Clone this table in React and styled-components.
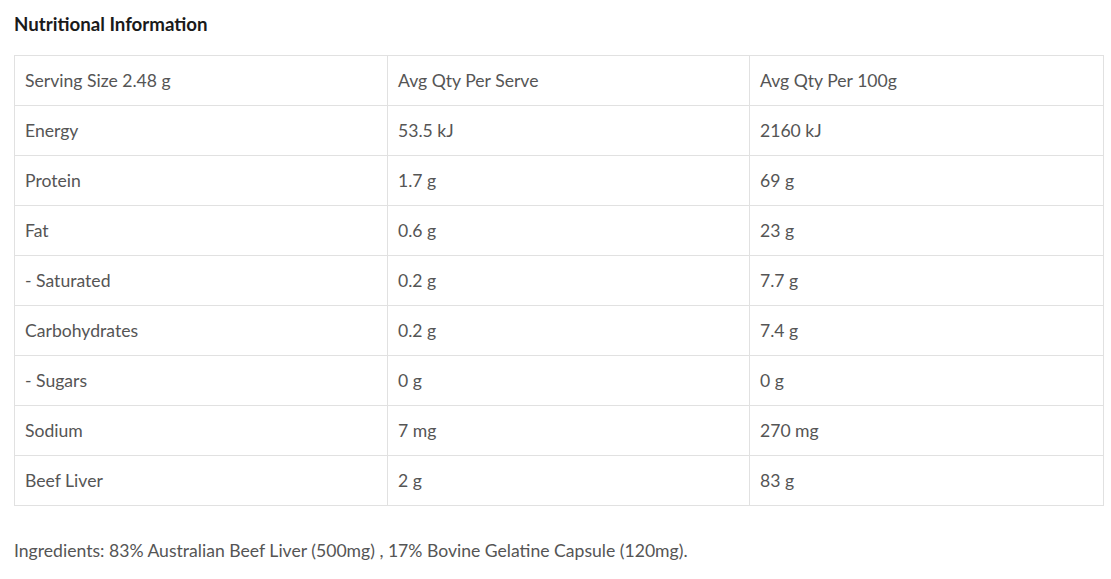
import React from 'react'
import styled, { createGlobalStyle } from 'styled-components'

const GlobalStyle = createGlobalStyle`
  body {
    margin: 0;
    background: #fff;
    font-family: Lato, 'Open Sans', sans-serif;
  }
`

const Wrapper = styled.div`
  padding: 12px 8px 0 14px;
`

const Title = styled.h3`
  margin: 0 0 19px;
  font-size: 18.7px;
  font-weight: 700;
  color: #1a1a1a;
  line-height: 24px;
`

const Table = styled.table`
  width: 1089px;
  border-collapse: collapse;
  table-layout: fixed;
`

const Cell = styled.td`
  border: 1px solid #e1e1e1;
  height: 50px;
  box-sizing: border-box;
  padding: 0 10px;
  font-size: 17.6px;
  color: #555;
  vertical-align: middle;
  width: ${(p) => p.$w}px;
`

const Ingredients = styled.p`
  margin: 34px 0 0;
  font-size: 17.6px;
  color: #555;
`

const rows = [
  ['Serving Size 2.48 g', 'Avg Qty Per Serve', 'Avg Qty Per 100g'],
  ['Energy', '53.5 kJ', '2160 kJ'],
  ['Protein', '1.7 g', '69 g'],
  ['Fat', '0.6 g', '23 g'],
  ['- Saturated', '0.2 g', '7.7 g'],
  ['Carbohydrates', '0.2 g', '7.4 g'],
  ['- Sugars', '0 g', '0 g'],
  ['Sodium', '7 mg', '270 mg'],
  ['Beef Liver', '2 g', '83 g'],
]

const widths = [373, 362, 354]

export default function App() {
  return (
    <>
      <GlobalStyle />
      <Wrapper>
        <Title>Nutritional Information</Title>
        <Table>
          <tbody>
            {rows.map((r, i) => (
              <tr key={i}>
                {r.map((c, j) => (
                  <Cell key={j} $w={widths[j]}>
                    {c}
                  </Cell>
                ))}
              </tr>
            ))}
          </tbody>
        </Table>
        <Ingredients>
          Ingredients: 83% Australian Beef Liver (500mg) , 17% Bovine Gelatine
          Capsule (120mg).
        </Ingredients>
      </Wrapper>
    </>
  )
}
